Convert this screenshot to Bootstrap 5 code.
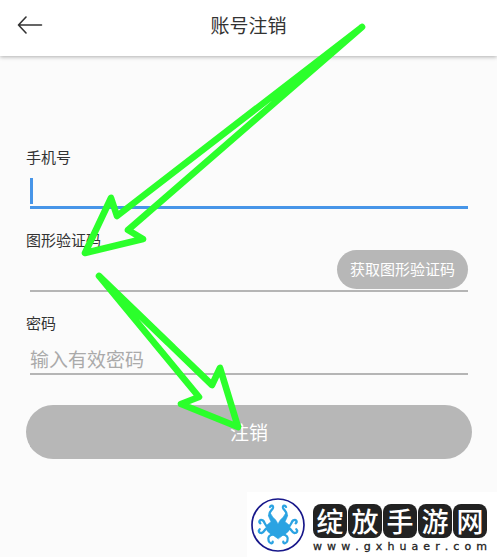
<!DOCTYPE html>
<html lang="zh-CN">
<head>
<meta charset="utf-8">
<meta name="viewport" content="width=device-width, initial-scale=1">
<title>账号注销</title>
<link href="https://cdn.jsdelivr.net/npm/bootstrap@5.3.0/dist/css/bootstrap.min.css" rel="stylesheet">
<style>
body { background: #fbfbfb; color: #333; font-family: "Noto Sans CJK SC", sans-serif; }
.top-bar { height: 56px; box-shadow: 0 1px 4px rgba(0,0,0,.3); }
.top-bar .side { width: 60px; }
.title-text { font-size: 19px; line-height: 28px; color: #333; padding-bottom: 6px; }
.form-area { padding: 91px 25px 32px 26px; }
.field { margin-bottom: 21px; }
.field-label { font-size: 15px; line-height: 20px; }
.field-row { height: 42px; margin: 0 4px; border-bottom: 2px solid #b5b5b5; }
.field-row.active { border-bottom: 3px solid #4795e8; }
.field-row input { font-size: 19px; line-height: 28px; padding-top: 10px; color: #333; outline: 0; min-width: 0; }
.field-row input::placeholder { color: #aaa; opacity: 1; }
.text-caret { width: 3px; height: 26px; background: #4795e8; margin-bottom: 2px; }
.grey-btn { background: #b7b7b7; color: #fff; border: 0; }
.code-btn { font-size: 15px; height: 39px; padding: 0 11px; margin-bottom: 1px; white-space: nowrap; width: 131px; }
.submit-btn { font-size: 19px; height: 54px; margin-top: 30px; }
.marks { width: 497px; height: 557px; pointer-events: none; z-index: 5; }
.brand { width: 250px; height: 65px; padding: 5px 10px 0 3px; color: #222; }
.brand-tiles { gap: 1px; padding-top: 7px; }
.brand-tile { width: 34px; height: 34px; border-radius: 8px; background: #222; color: #fff; font-size: 27px; line-height: 33px; font-weight: 500; }
.brand-url { font-family: "DejaVu Sans", sans-serif; font-size: 11px; line-height: 12px; padding-top: 3px; -webkit-text-stroke: 0.3px #222; }
</style>
<script src="https://cdn.jsdelivr.net/npm/bootstrap@5.3.0/dist/js/bootstrap.bundle.min.js"></script>
</head>
<body>
<div class="d-flex flex-column min-vh-100 position-relative">
  <header class="top-bar bg-white d-flex align-items-center">
    <div class="side">
      <button type="button" class="btn border-0 p-0 ps-3 d-flex pb-2" aria-label="返回">
        <svg width="28" height="20" viewBox="0 0 28 20" fill="none" stroke="#333" stroke-width="1.6" stroke-linecap="round" stroke-linejoin="round"><path d="M25.500 11H2.500M10 3L2.500 11L10 19"/></svg>
      </button>
    </div>
    <h1 class="title-text flex-grow-1 text-center fw-normal m-0">账号注销</h1>
    <div class="side"></div>
  </header>

  <form class="form-area">
    <div class="field">
      <label class="field-label d-block" for="phone">手机号</label>
      <div class="field-row active d-flex align-items-end">
        <span class="text-caret"></span>
        <input id="phone" type="tel" class="flex-grow-1 border-0 bg-transparent px-0 pb-0">
      </div>
    </div>
    <div class="field">
      <label class="field-label d-block" for="captcha">图形验证码</label>
      <div class="field-row d-flex align-items-end">
        <input id="captcha" type="text" class="flex-grow-1 border-0 bg-transparent px-0 pb-0">
        <button type="button" class="grey-btn code-btn rounded-pill flex-shrink-0">获取图形验证码</button>
      </div>
    </div>
    <div class="field mb-0">
      <label class="field-label d-block" for="password">密码</label>
      <div class="field-row d-flex align-items-end">
        <input id="password" type="password" class="flex-grow-1 border-0 bg-transparent px-0 pb-0" placeholder="输入有效密码">
      </div>
    </div>
    <button type="submit" class="grey-btn submit-btn rounded-pill w-100 d-block">注销</button>
  </form>

  <footer class="brand bg-white mt-auto ms-auto d-flex justify-content-between">
    <svg class="flex-shrink-0" width="56" height="56" viewBox="29 35 168 168" fill="none" stroke="#2ba3e2" stroke-linecap="round" stroke-linejoin="round">
      <circle cx="113" cy="119" r="78" fill="#fff" stroke="#17178a" stroke-width="5"/>
      <path d="M113 160L96 148Q82 142 77 130L80 119L92 109Q86 98 84 90L91 85Q96 96 106 104Q110 109 113 117Q116 109 120 104Q130 96 135 85L142 90Q140 98 134 109L146 119L149 130Q144 142 130 148Z" fill="#2ba3e2" stroke-width="2"/>
      <path d="M88 91C84 79 96 75 98 67C99 59 91 59 89 65M138 91C142 79 130 75 128 67C127 59 135 59 137 65" stroke-width="7"/>
      <path d="M83 124C72 122 75 110 67 105C59 101 54 109 60 114M143 124C154 122 151 110 159 105C167 101 172 109 166 114" stroke-width="7"/>
      <path d="M83 129C72 127 73 142 64 143C55 143 53 136 58 132M143 129C154 127 153 142 162 143C171 143 173 136 168 132" stroke-width="7"/>
      <path d="M100 147C87 147 81 157 85 167C88 176 98 176 97 169M126 147C139 147 145 157 141 167C138 176 128 176 129 169" stroke-width="7"/>
    </svg>
    <div>
      <div class="brand-tiles d-flex">
        <span class="brand-tile text-center">绽</span><span class="brand-tile text-center">放</span><span class="brand-tile text-center">手</span><span class="brand-tile text-center">游</span><span class="brand-tile text-center">网</span>
      </div>
      <div class="brand-url d-flex justify-content-between"><span>w</span><span>w</span><span>w</span><span>.</span><span>g</span><span>x</span><span>h</span><span>u</span><span>a</span><span>e</span><span>r</span><span>.</span><span>c</span><span>o</span><span>m</span></div>
    </div>
  </footer>

  <!-- Hand-drawn arrows over the form -->
  <svg class="marks position-absolute top-0 start-0" viewBox="0 0 497 557" fill="none" stroke="#2bff2b" stroke-width="6.6" stroke-linecap="round" stroke-linejoin="round" aria-hidden="true">
    <path d="M362 27L117 216L111 198L85 253L143 239L128 230Z"/>
    <path d="M99 276L199 397L181 404L238 427L220 368L212 385Z"/>
  </svg>
</div>
</body>
</html>
